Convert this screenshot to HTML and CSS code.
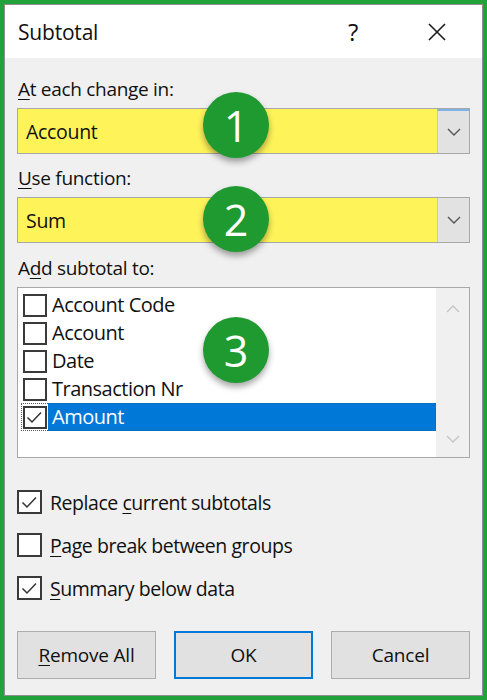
FILE: index.html
```html
<!DOCTYPE html>
<html>
<head>
<meta charset="utf-8">
<link rel="stylesheet" href="styles.css">
</head>
<body>
<div class="window">
  <div class="inner">
    <div class="titlebar">
      <span class="title">Subtotal</span>
      <span class="help">?</span>
      <svg class="close" width="20" height="18" viewBox="0 0 20 18"><path d="M2 1 L18 17 M18 1 L2 17" stroke="#1a1a1a" stroke-width="1.6" fill="none"/></svg>
    </div>
    <div class="content">
      <div class="label"><u>A</u>t each change in:</div>
      <div class="combo focused">
        <div class="combo-value">Account</div>
        <div class="combo-btn"><svg width="14" height="8" viewBox="0 0 14 8"><path d="M1 1 L7 7 L13 1" stroke="#555" stroke-width="1.4" fill="none"/></svg></div>
        <div class="badge b1">1</div>
      </div>
      <div class="label"><u>U</u>se function:</div>
      <div class="combo c2">
        <div class="combo-value">Sum</div>
        <div class="combo-btn"><svg width="14" height="8" viewBox="0 0 14 8"><path d="M1 1 L7 7 L13 1" stroke="#555" stroke-width="1.4" fill="none"/></svg></div>
        <div class="badge b2">2</div>
      </div>
      <div class="label">A<u>d</u>d subtotal to:</div>
      <div class="listbox">
        <div class="items">
          <div class="item"><span class="cell"><span class="box"></span></span><span class="text">Account Code</span></div>
          <div class="item"><span class="cell"><span class="box"></span></span><span class="text">Account</span></div>
          <div class="item"><span class="cell"><span class="box"></span></span><span class="text">Date</span></div>
          <div class="item"><span class="cell"><span class="box"></span></span><span class="text">Transaction Nr</span></div>
          <div class="item selected"><span class="cell"><span class="box"><svg width="19" height="19" viewBox="0 0 19 19"><path d="M2.5 9.5 L7 14 L16 4.5" stroke="#333" stroke-width="1.5" fill="none"/></svg></span></span><span class="text">Amount</span></div>
        </div>
        <div class="scroll">
          <svg width="14" height="8" viewBox="0 0 14 8"><path d="M1 7 L7 1 L13 7" stroke="#c4c4c4" stroke-width="1.4" fill="none"/></svg>
          <svg width="14" height="8" viewBox="0 0 14 8"><path d="M1 1 L7 7 L13 1" stroke="#c4c4c4" stroke-width="1.4" fill="none"/></svg>
        </div>
        <div class="badge b3">3</div>
      </div>
      <div class="options">
        <div class="opt"><span class="box"><svg width="19" height="19" viewBox="0 0 19 19"><path d="M2.5 9.5 L7 14 L16 4.5" stroke="#333" stroke-width="1.5" fill="none"/></svg></span><span class="otext">Replace <u>c</u>urrent subtotals</span></div>
        <div class="opt"><span class="box"></span><span class="otext"><u>P</u>age break between groups</span></div>
        <div class="opt"><span class="box"><svg width="19" height="19" viewBox="0 0 19 19"><path d="M2.5 9.5 L7 14 L16 4.5" stroke="#333" stroke-width="1.5" fill="none"/></svg></span><span class="otext"><u>S</u>ummary below data</span></div>
      </div>
      <div class="buttons">
        <div class="btn"><u>R</u>emove All</div>
        <div class="btn default">OK</div>
        <div class="btn">Cancel</div>
      </div>
    </div>
  </div>
</div>
</body>
</html>
```
FILE: styles.css
```css
html, body {
  margin: 0;
  padding: 0;
  background: #ffffff;
}
body {
  font-family: "Open Sans", "Noto Sans", sans-serif;
  color: #111;
}
.window {
  width: 487px;
  height: 700px;
  box-sizing: border-box;
  border: 4px solid #22a23a;
}
.inner {
  height: 100%;
  box-sizing: border-box;
  border: 1px solid #8f8f8f;
  background: #f0f0f0;
  display: flex;
  flex-direction: column;
}
.titlebar {
  height: 53px;
  background: #ffffff;
  display: flex;
  align-items: center;
  padding-left: 13px;
}
.title {
  font-size: 21px;
  letter-spacing: -0.2px;
  flex: 1;
}
.help {
  font-size: 24px;
  width: 28px;
  margin-right: 51px;
}
.close {
  margin-right: 35px;
}
.content {
  padding: 19px 12px 0 12px;
}
u {
  text-decoration: underline;
  text-underline-offset: 3px;
  text-decoration-thickness: 1px;
}
.label {
  font-size: 19px;
  letter-spacing: -0.3px;
  line-height: 24px;
  height: 24px;
  padding-left: 1px;
  margin-bottom: 7px;
}
.combo {
  position: relative;
  height: 46px;
  box-sizing: border-box;
  border: 1px solid #a8a8a8;
  display: flex;
  margin-bottom: 12px;
}
.combo.c2 {
  margin-bottom: 13px;
}
.combo-value {
  flex: 1;
  background: #fff35a;
  font-size: 19.5px;
  letter-spacing: -0.3px;
  display: flex;
  align-items: center;
  padding-left: 8px;
}
.combo-btn {
  width: 31px;
  background: #e2e2e2;
  border-left: 1px solid #c8c8c8;
  display: flex;
  align-items: center;
  justify-content: center;
}
.combo.focused .combo-btn {
  border-top: 2px solid #7fb2e6;
}
.badge {
  position: absolute;
  left: 185px;
  width: 66px;
  height: 66px;
  border-radius: 50%;
  background: #1f9a30;
  color: #ffffff;
  font-size: 43px;
  display: flex;
  align-items: center;
  justify-content: center;
  box-shadow: 0 4px 6px rgba(0, 0, 0, 0.35);
  z-index: 2;
}
.b1 { top: -17px; }
.b2 { top: -12px; }
.b3 { top: 29px; }
.listbox {
  position: relative;
  height: 171px;
  box-sizing: border-box;
  border: 1px solid #a8a8a8;
  display: flex;
  margin-bottom: 32px;
}
.items {
  flex: 1;
  background: #ffffff;
  padding: 3px 0 0 3px;
}
.item {
  height: 28px;
  display: flex;
  box-sizing: border-box;
}
.cell {
  width: 27px;
  display: flex;
  align-items: center;
  justify-content: center;
}
.box {
  width: 24px;
  height: 23px;
  box-sizing: border-box;
  border: 2px solid #3a3a3a;
  background: #ffffff;
  display: flex;
  align-items: center;
  justify-content: center;
}
.text {
  flex: 1;
  font-size: 20px;
  letter-spacing: -0.5px;
  line-height: 28px;
  padding-left: 4px;
}
.item.selected {
  outline: 1px dotted #555;
  outline-offset: -1px;
}
.item.selected .text {
  background: #0078d7;
  color: #ffffff;
}
.scroll {
  width: 33px;
  background: #f0f0f0;
  display: flex;
  flex-direction: column;
  align-items: center;
  justify-content: space-between;
  padding: 17px 0 14px 0;
}
.options {
  display: flex;
  flex-direction: column;
  gap: 19px;
  margin-bottom: 31px;
}
.opt {
  height: 24px;
  display: flex;
  align-items: center;
}
.opt .box {
  width: 25px;
  height: 24px;
  background: #ffffff;
}
.otext {
  font-size: 19.5px;
  letter-spacing: -0.45px;
  padding-left: 8px;
}
.buttons {
  display: flex;
  gap: 18px;
}
.btn {
  width: 139px;
  height: 48px;
  box-sizing: border-box;
  background: #e1e1e1;
  border: 1px solid #adadad;
  font-size: 19px;
  letter-spacing: -0.2px;
  display: flex;
  align-items: center;
  justify-content: center;
}
.btn.default {
  border: 2px solid #0078d7;
}
```
